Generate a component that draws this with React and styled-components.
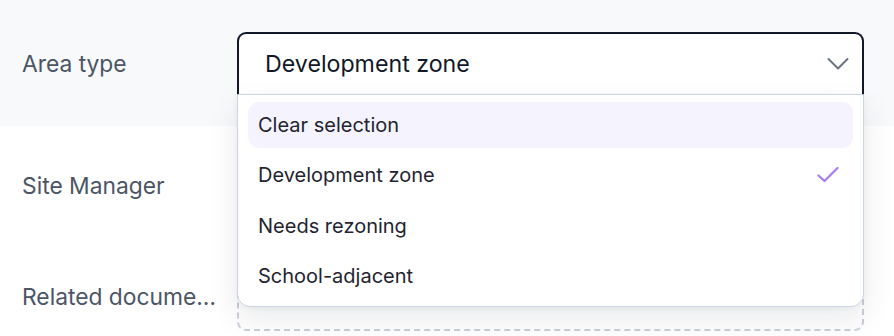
import React from "react";
import styled, { createGlobalStyle } from "styled-components";

const GlobalStyle = createGlobalStyle`
  body {
    margin: 0;
    background: #ffffff;
    font-family: Inter, "Noto Sans", sans-serif;
  }
`;

const Form = styled.div`
  width: 894px;
  height: 336px;
  overflow: hidden;
  display: flex;
  flex-direction: column;
`;

const Row = styled.div`
  flex-shrink: 0;
  display: grid;
  grid-template-columns: 215px 627px;
  align-items: center;
  padding: 0 30px 0 22px;
  height: ${p => p.height}px;
  background: ${p => (p.shaded ? "#f8f9fb" : "#ffffff")};
`;

const Label = styled.div`
  font-size: 22.8px;
  color: #4b5565;
  white-space: nowrap;
  overflow: hidden;
  text-overflow: ellipsis;
  max-width: 194px;
`;

const SelectWrap = styled.div`
  position: relative;
`;

const Trigger = styled.div`
  height: 63px;
  box-sizing: border-box;
  border: 2px solid #111827;
  border-bottom: none;
  border-radius: 9px 9px 0 0;
  background: #ffffff;
  display: flex;
  align-items: center;
  justify-content: space-between;
  padding: 0 13px 0 26px;
  font-size: 23.2px;
  color: #111827;
`;

const Menu = styled.div`
  position: absolute;
  left: 0;
  right: 0;
  top: 62px;
  box-sizing: border-box;
  background: #ffffff;
  border: 1.5px solid #cbd5e1;
  border-radius: 0 0 13px 13px;
  padding: 7px 10px 7px 10px;
  display: flex;
  flex-direction: column;
  gap: 4.5px;
  box-shadow: 0 12px 32px rgba(15, 23, 42, 0.09), 0 2px 6px rgba(15, 23, 42, 0.04);
  z-index: 2;
`;

const Option = styled.div`
  height: 46px;
  border-radius: 11px;
  display: flex;
  align-items: center;
  justify-content: space-between;
  padding: 0 14px 0 10px;
  font-size: 20px;
  color: #1f2430;
  background: ${p => (p.active ? "#f5f3fe" : "transparent")};
`;

const Dropzone = styled.div`
  height: 70px;
  box-sizing: border-box;
  border: 2px dashed #c9d0db;
  border-radius: 9px;
`;

const Chevron = () => (
  <svg width="22" height="14" viewBox="0 0 22 14" fill="none">
    <path d="M1.5 2 L11 11.5 L20.5 2" stroke="#6b7280" strokeWidth="2" strokeLinecap="round" strokeLinejoin="round" />
  </svg>
);

const Check = () => (
  <svg width="22" height="18" viewBox="0 0 22 18" fill="none">
    <path d="M1.5 9.5 L7.5 15 L20.5 2" stroke="#a47bf0" strokeWidth="2.2" strokeLinecap="round" strokeLinejoin="round" />
  </svg>
);

const options = [
  { label: "Clear selection", active: true },
  { label: "Development zone", selected: true },
  { label: "Needs rezoning" },
  { label: "School-adjacent" },
];

export default function App() {
  return (
    <>
      <GlobalStyle />
      <Form>
        <Row shaded height={126}>
          <Label>Area type</Label>
          <SelectWrap>
            <Trigger>
              <span>Development zone</span>
              <Chevron />
            </Trigger>
            <Menu>
              {options.map(o => (
                <Option key={o.label} active={o.active}>
                  <span>{o.label}</span>
                  {o.selected && <Check />}
                </Option>
              ))}
            </Menu>
          </SelectWrap>
        </Row>
        <Row height={118}>
          <Label>Site Manager</Label>
          <div />
        </Row>
        <Row height={104}>
          <Label>Related documents</Label>
          <Dropzone />
        </Row>
      </Form>
    </>
  );
}
